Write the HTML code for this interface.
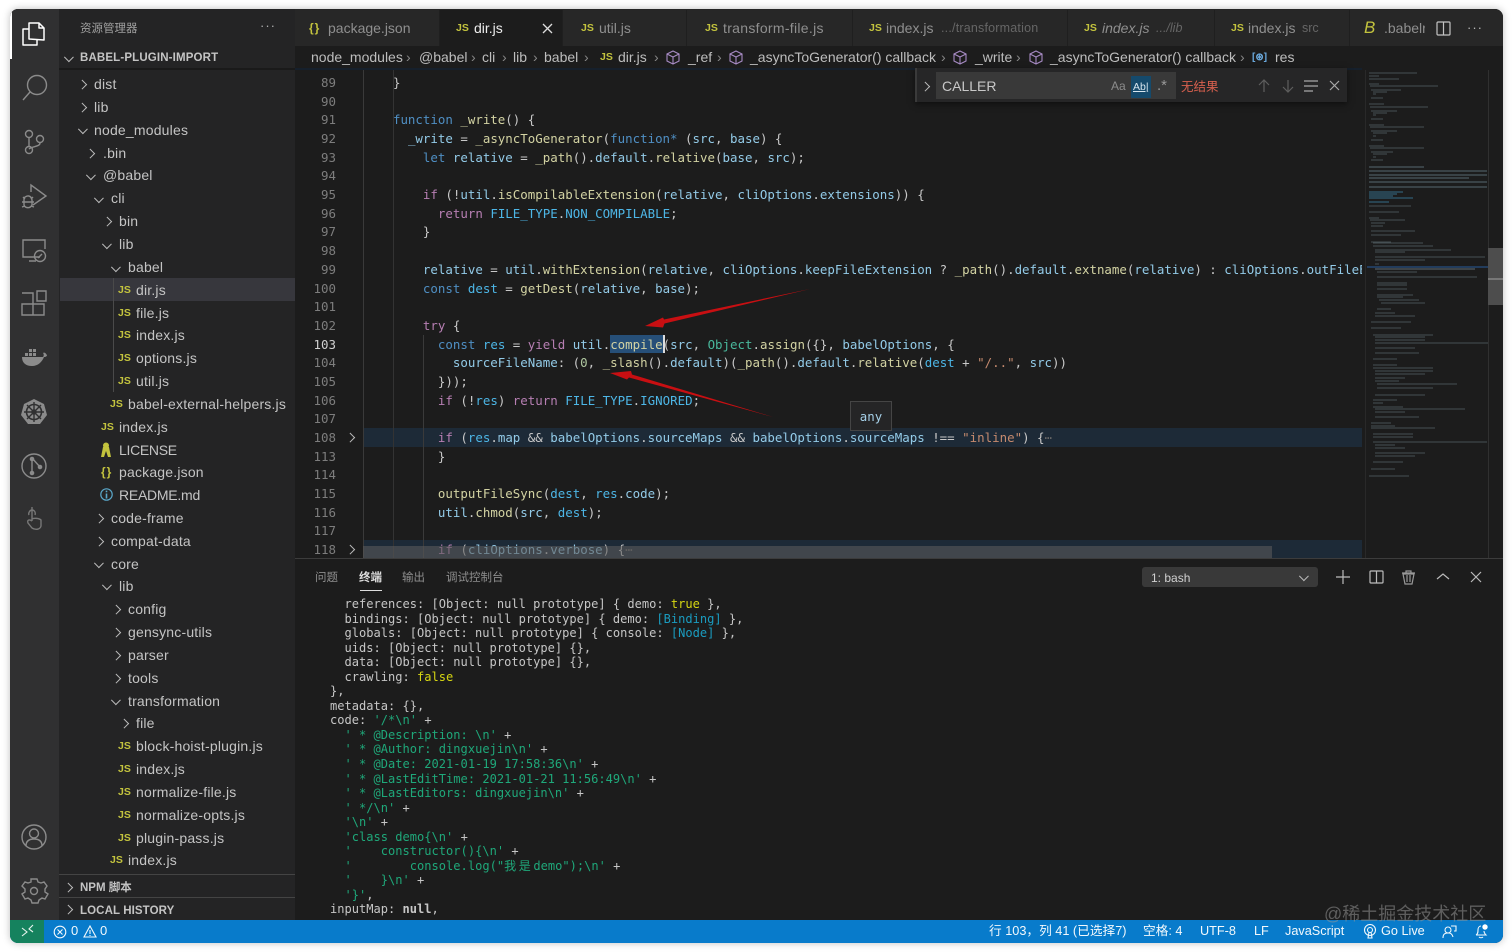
<!DOCTYPE html>
<html><head><meta charset="utf-8">
<style>
html,body{margin:0;padding:0;background:#fff;width:1512px;height:952px;overflow:hidden}
#sh{position:absolute;left:10px;top:9px;width:1493px;height:934px;border-radius:8px;box-shadow:0 0 8px rgba(0,0,0,.25)}
#w{position:absolute;left:0;top:0;width:1512px;height:952px;clip-path:inset(9px 9px 9px 10px round 8px);background:#1c1c1c;font-family:"Liberation Sans","Noto Sans CJK SC",sans-serif;color:#ccc;overflow:hidden}
.b{position:absolute}
.t{position:absolute;height:24px;line-height:24px;white-space:nowrap;font-size:14px;color:#c4c4c4;letter-spacing:.19px}
.j{position:absolute;font:bold 10.5px/24px "Liberation Sans",sans-serif;color:#c3c33e;height:24px;white-space:nowrap}
.cr,.cd{position:absolute;width:6.5px;height:6.5px;border-top:1.1px solid #bbb;border-right:1.1px solid #bbb;box-sizing:border-box}
.cr{transform:rotate(45deg)}.cd{transform:rotate(135deg)}
.tb{position:absolute;top:10px;height:36px;background:#272727;border-right:1px solid #1f1f1f;box-sizing:border-box}
.tt{position:absolute;top:16px;line-height:24px;font-size:14px;color:#8f8f8f;white-space:nowrap}
.bc{position:absolute;top:46px;line-height:23px;font-size:14px;color:#bdbdbd;white-space:nowrap}
.ln{position:absolute;margin-top:1px;width:40px;left:296px;text-align:right;font:12.45px/18px "DejaVu Sans Mono",monospace;color:#7d7d7d;height:19px}
.cl{position:absolute;margin-top:1px;left:363px;width:999px;overflow:hidden;font:12.45px/18px "DejaVu Sans Mono",monospace;color:#c8c8c8;white-space:pre;height:18px}
.k{color:#4f8fc4}.p{color:#b77fb3}.v{color:#93cbe8}.f{color:#d3d3a3}.s{color:#c58a6e}.c{color:#4db6e6}.n{color:#49b89c}.m{color:#b0c8a0}
#term{position:absolute;left:330px;top:597px;font:12.05px/14.55px "DejaVu Sans Mono","Noto Sans CJK SC",monospace;color:#c6c6c6;white-space:pre}
#term .g{color:#1fa87a}#term .y{color:#d6d612}#term .u{color:#1a9cc0}
.st{position:absolute;top:920px;line-height:22px;font-size:12.7px;color:#f2f8fc;white-space:nowrap}
.pt{position:absolute;top:566px;line-height:24px;font-size:11.5px;color:#8e8e8e;white-space:nowrap}
</style></head><body>
<div id="sh"></div>
<div id="w">
<!-- activity bar -->
<div class="b" style="left:10px;top:9px;width:49px;height:911px;background:#303031"></div>
<div class="b" style="left:10px;top:9px;width:2px;height:50px;background:#fff"></div>
<svg class="b" style="left:0;top:0" width="60" height="560" fill="none" stroke="#8b8b8b" stroke-width="1.4">
<path stroke="#fff" stroke-width="1.5" stroke-linejoin="round" d="M29 39V23h10l5 5v12zM39 23v5h5M29 29h-6v16h14v-5"/>
<circle cx="37" cy="85" r="9.5"/><path d="M30 92l-7 8"/>
<circle cx="29" cy="134" r="3.5"/><circle cx="40" cy="139" r="3.5"/><circle cx="29" cy="150" r="3.5"/><path d="M29 138v8M40 143c0 4-8 3-11 6"/>
<path d="M31 192v-7l15 11-13 9M24 198c3-3 7-3 8 2v5c-2 4-7 3-8 0zM22 202h12M22 207l3-1M34 207l-3-1M23 197l2 2M33 197l-2 2"/>
<path d="M40 257H23v-17h22v9M29 261h7"/><circle cx="40" cy="256" r="5.5"/><path d="M38 258l4-4"/>
<path d="M22 304h11v11H22zM33 304h11v11H33zM22 293h11v11M37 291h9v10h-9z"/>
<path fill="#8b8b8b" stroke="none" d="M22 357h21c1-1 1-3 0-4 1-1 3 0 3 1l1 1c0 1-1 2-3 2-2 5-6 9-12 9-6 0-10-3-10-9zM25 353h3v3h-3zM29 353h3v3h-3zM33 353h3v3h-3zM33 349h3v3h-3zM29 349h3v3h-3z"/>
<path fill="#8b8b8b" stroke="none" d="M34 399l10 5 3 11-7 9H28l-7-9 3-11z"/>
<circle cx="34" cy="412" r="7.5" stroke="#303031" stroke-width="1.6"/><circle cx="34" cy="412" r="2" stroke="#303031" /><path stroke="#303031" d="M34 402v20M24 412h20M27 405l14 14M41 405l-14 14"/>
<circle cx="34" cy="466" r="12"/><path d="M32 458v16M32 458l8 9"/><circle cx="32" cy="459" r="1.6" fill="#8b8b8b"/><circle cx="32" cy="473" r="1.6" fill="#8b8b8b"/><circle cx="40" cy="467" r="1.6" fill="#8b8b8b"/>
<path stroke="#777" d="M32 507v14M32 521c-3-2-5-1-4 2l4 5c3 2 8 2 9-2v-6c-2-2-7-2-9-1M35 515c1-3-1-5-3-5s-4 3-3 5"/>
</svg>
<svg class="b" style="left:0;top:820px" width="60" height="100" fill="none" stroke="#8b8b8b" stroke-width="1.4">
<circle cx="34" cy="17" r="12"/><circle cx="34" cy="13.5" r="4.5"/><path d="M26 26c0-5 3-7 8-7s8 2 8 7"/>
<circle cx="34" cy="71" r="3.5"/>
<path d="M31 59h6l1 3 3 1 3-1 3 4-2 3v3l3 2-3 5-3-1-3 2-1 3h-6l-1-3-3-2-3 1-3-5 3-2v-3l-3-3 3-4 3 1 3-1z"/>
</svg>

<!-- sidebar -->
<div class="b" style="left:59px;top:9px;width:236px;height:911px;background:#242425"></div>
<div class="b" style="left:80px;top:18px;font-size:11.5px;line-height:22px;color:#a0a0a0">资源管理器</div>
<div class="b" style="left:260px;top:15px;font-size:13px;line-height:22px;color:#b0b0b0;letter-spacing:1px">···</div>
<div class="cd" style="left:66px;top:54px"></div>
<div class="b" style="left:80px;top:47px;font-size:11.5px;font-weight:bold;line-height:22px;color:#c4c4c4;letter-spacing:.15px">BABEL-PLUGIN-IMPORT</div>
<div class="b" style="left:59px;top:68px;width:236px;height:2px;background:#1a1a1a"></div>
<div class="b" style="left:60px;top:278px;width:235px;height:23px;background:#37373d"></div>
<div class="b" style="left:113px;top:278px;width:1px;height:114px;background:#4a4a4a"></div>

<div class="cr" style="left:79px;top:81px"></div><div class="t" style="left:94px;top:72px">dist</div>
<div class="cr" style="left:79px;top:104px"></div><div class="t" style="left:94px;top:95px">lib</div>
<div class="cd" style="left:80px;top:126px"></div><div class="t" style="left:94px;top:118px">node_modules</div>
<div class="cr" style="left:87px;top:150px"></div><div class="t" style="left:103px;top:141px">.bin</div>
<div class="cd" style="left:88px;top:172px"></div><div class="t" style="left:103px;top:163px">@babel</div>
<div class="cd" style="left:96px;top:195px"></div><div class="t" style="left:111px;top:186px">cli</div>
<div class="cr" style="left:104px;top:218px"></div><div class="t" style="left:119px;top:209px">bin</div>
<div class="cd" style="left:104px;top:241px"></div><div class="t" style="left:119px;top:232px">lib</div>
<div class="cd" style="left:113px;top:264px"></div><div class="t" style="left:128px;top:255px">babel</div>
<div class="j" style="left:118px;top:278px">JS</div><div class="t" style="left:136px;top:278px">dir.js</div>
<div class="j" style="left:118px;top:301px">JS</div><div class="t" style="left:136px;top:301px">file.js</div>
<div class="j" style="left:118px;top:323px">JS</div><div class="t" style="left:136px;top:323px">index.js</div>
<div class="j" style="left:118px;top:346px">JS</div><div class="t" style="left:136px;top:346px">options.js</div>
<div class="j" style="left:118px;top:369px">JS</div><div class="t" style="left:136px;top:369px">util.js</div>
<div class="j" style="left:110px;top:392px">JS</div><div class="t" style="left:128px;top:392px">babel-external-helpers.js</div>
<div class="j" style="left:101px;top:415px">JS</div><div class="t" style="left:119px;top:415px">index.js</div>
<svg class="b" style="left:101px;top:442px" width="12" height="16" fill="#c3c33e"><circle cx="5" cy="3.5" r="3"/><path d="M2 5h6l2 10H7L5 9l-2 6H0z"/></svg><div class="t" style="left:119px;top:438px;letter-spacing:-.3px">LICENSE</div>
<div class="j" style="left:101px;top:460px;font-size:12px;letter-spacing:1px">{}</div><div class="t" style="left:119px;top:460px">package.json</div>
<svg class="b" style="left:100px;top:488px" width="13" height="13" fill="none" stroke="#5aa7c9" stroke-width="1.2"><circle cx="6.5" cy="6.5" r="5.7"/><path stroke-width="1.6" d="M6.5 5.5v5M6.5 2.6v1.6"/></svg><div class="t" style="left:119px;top:483px;letter-spacing:-.25px">README.md</div>
<div class="cr" style="left:96px;top:515px"></div><div class="t" style="left:111px;top:506px">code-frame</div>
<div class="cr" style="left:96px;top:538px"></div><div class="t" style="left:111px;top:529px">compat-data</div>
<div class="cd" style="left:96px;top:560px"></div><div class="t" style="left:111px;top:552px">core</div>
<div class="cd" style="left:104px;top:582px"></div><div class="t" style="left:119px;top:574px">lib</div>
<div class="cr" style="left:113px;top:606px"></div><div class="t" style="left:128px;top:597px">config</div>
<div class="cr" style="left:113px;top:629px"></div><div class="t" style="left:128px;top:620px">gensync-utils</div>
<div class="cr" style="left:113px;top:652px"></div><div class="t" style="left:128px;top:643px">parser</div>
<div class="cr" style="left:113px;top:675px"></div><div class="t" style="left:128px;top:666px">tools</div>
<div class="cd" style="left:113px;top:697px"></div><div class="t" style="left:128px;top:689px">transformation</div>
<div class="cr" style="left:121px;top:720px"></div><div class="t" style="left:136px;top:711px">file</div>
<div class="j" style="left:118px;top:734px">JS</div><div class="t" style="left:136px;top:734px">block-hoist-plugin.js</div>
<div class="j" style="left:118px;top:757px">JS</div><div class="t" style="left:136px;top:757px">index.js</div>
<div class="j" style="left:118px;top:780px">JS</div><div class="t" style="left:136px;top:780px">normalize-file.js</div>
<div class="j" style="left:118px;top:803px">JS</div><div class="t" style="left:136px;top:803px">normalize-opts.js</div>
<div class="j" style="left:118px;top:826px">JS</div><div class="t" style="left:136px;top:826px">plugin-pass.js</div>
<div class="j" style="left:110px;top:848px">JS</div><div class="t" style="left:128px;top:848px">index.js</div>

<div class="b" style="left:59px;top:874px;width:236px;height:1px;background:#444"></div>
<div class="b" style="left:59px;top:897px;width:236px;height:1px;background:#444"></div>
<div class="cr" style="left:65px;top:884px"></div><div class="b" style="left:80px;top:877px;font-size:11.5px;font-weight:bold;line-height:22px;color:#c4c4c4">NPM 脚本</div>
<div class="cr" style="left:65px;top:906px"></div><div class="b" style="left:80px;top:900px;font-size:11.5px;font-weight:bold;line-height:22px;color:#c4c4c4;letter-spacing:.1px">LOCAL HISTORY</div>

<!-- tab bar -->
<div class="b" style="left:295px;top:9px;width:1208px;height:37px;background:#272727"></div>
<div class="tb" style="left:295px;width:145px"></div>
<div class="tb" style="left:440px;width:123px;background:#1c1c1c"></div>
<div class="tb" style="left:563px;width:124px"></div>
<div class="tb" style="left:687px;width:166px"></div>
<div class="tb" style="left:853px;width:215px"></div>
<div class="tb" style="left:1068px;width:147px"></div>
<div class="tb" style="left:1215px;width:135px"></div>
<div class="j" style="left:309px;top:16px;font-size:12px;letter-spacing:1px">{}</div><div class="tt" style="left:328px">package.json</div>
<div class="j" style="left:456px;top:16px">JS</div><div class="tt" style="left:474px;color:#ececec">dir.js</div>
<svg class="b" style="left:542px;top:23px" width="11" height="11" stroke="#ddd" stroke-width="1.3"><path d="M1 1l9 9M10 1l-9 9"/></svg>
<div class="j" style="left:581px;top:16px">JS</div><div class="tt" style="left:599px">util.js</div>
<div class="j" style="left:705px;top:16px">JS</div><div class="tt" style="left:723px;letter-spacing:.3px">transform-file.js</div>
<div class="j" style="left:869px;top:16px">JS</div><div class="tt" style="left:886px">index.js</div><div class="tt" style="left:941px;font-size:12.5px;color:#666;letter-spacing:.2px">.../transformation</div>
<div class="j" style="left:1084px;top:16px">JS</div><div class="tt" style="left:1102px;font-style:italic">index.js</div><div class="tt" style="left:1156px;font-size:12.5px;color:#666;font-style:italic">.../lib</div>
<div class="j" style="left:1231px;top:16px">JS</div><div class="tt" style="left:1248px">index.js</div><div class="tt" style="left:1302px;font-size:12.5px;color:#666">src</div>
<div class="b" style="left:1350px;top:10px;width:75px;height:36px;overflow:hidden">
<div class="tt" style="left:14px;top:6px;color:#c3c33e;font:italic 17px/24px 'Liberation Sans',sans-serif">B</div><div class="tt" style="left:34px;top:6px">.babelrc</div></div>
<svg class="b" style="left:1436px;top:21px" width="15" height="15" fill="none" stroke="#c4c4c4" stroke-width="1.2"><rect x="1" y="1" width="13" height="13" rx="1"/><path d="M7.5 1v13"/></svg>
<div class="b" style="left:1467px;top:17px;font-size:13px;line-height:22px;color:#b8b8b8;letter-spacing:1px">···</div>

<!-- breadcrumbs -->
<div class="b" style="left:295px;top:46px;width:1208px;height:22px;background:#1c1c1c"></div>
<div class="bc" style="left:311px">node_modules</div>
<div class="bc" style="left:406px;color:#888">›</div>
<div class="bc" style="left:419px">@babel</div>
<div class="bc" style="left:471px;color:#888">›</div>
<div class="bc" style="left:482px">cli</div>
<div class="bc" style="left:502px;color:#888">›</div>
<div class="bc" style="left:513px">lib</div>
<div class="bc" style="left:533px;color:#888">›</div>
<div class="bc" style="left:544px">babel</div>
<div class="bc" style="left:584px;color:#888">›</div>
<div class="j" style="left:600px;top:45px">JS</div>
<div class="bc" style="left:618px">dir.js</div>
<div class="bc" style="left:654px;color:#888">›</div>
<svg class="b" style="left:666px;top:50px;" width="14" height="15" fill="none" stroke="#a78bc4" stroke-width="1.1"><path d="M7 1l6 3v7l-6 3-6-3V4zM1 4l6 3 6-3M7 7v7"/></svg>
<div class="bc" style="left:688px">_ref</div>
<div class="bc" style="left:717px;color:#888">›</div>
<svg class="b" style="left:729px;top:50px" width="14" height="15" fill="none" stroke="#a78bc4" stroke-width="1.1"><path d="M7 1l6 3v7l-6 3-6-3V4zM1 4l6 3 6-3M7 7v7"/></svg>
<div class="bc" style="left:750px">_asyncToGenerator() callback</div>
<div class="bc" style="left:941px;color:#888">›</div>
<svg class="b" style="left:953px;top:50px" width="14" height="15" fill="none" stroke="#a78bc4" stroke-width="1.1"><path d="M7 1l6 3v7l-6 3-6-3V4zM1 4l6 3 6-3M7 7v7"/></svg>
<div class="bc" style="left:975px">_write</div>
<div class="bc" style="left:1016px;color:#888">›</div>
<svg class="b" style="left:1029px;top:50px" width="14" height="15" fill="none" stroke="#a78bc4" stroke-width="1.1"><path d="M7 1l6 3v7l-6 3-6-3V4zM1 4l6 3 6-3M7 7v7"/></svg>
<div class="bc" style="left:1050px">_asyncToGenerator() callback</div>
<div class="bc" style="left:1240px;color:#888">›</div>
<div class="bc" style="left:1252px;font-size:10px;color:#6aa9dd;font-weight:bold">[⊛]</div>
<div class="bc" style="left:1275px">res</div>
<div class="b" style="left:295px;top:68px;width:1070px;height:2px;background:#16202c"></div>

<!-- editor overlays -->
<div class="b" style="left:363px;top:428px;width:999px;height:19px;background:#1d2a37"></div>
<div class="b" style="left:363px;top:540px;width:999px;height:18px;background:#1d2a37"></div>
<div class="b" style="left:610px;top:335px;width:53px;height:18px;background:#264f78"></div>
<div class="b" style="left:663px;top:335px;width:1.5px;height:18px;background:#ddd"></div>
<div class="b" style="left:363px;top:70px;width:1px;height:488px;background:#3a3a3a"></div>
<div class="b" style="left:393px;top:70px;width:1px;height:488px;background:#333"></div>
<div class="b" style="left:423px;top:335px;width:1px;height:223px;background:#3a3a3a"></div>

<div class="ln" style="top:73px">89</div><div class="cl" style="top:73px">    }</div>
<div class="ln" style="top:92px">90</div>
<div class="ln" style="top:110px">91</div><div class="cl" style="top:110px">    <span class="k">function</span> <span class="f">_write</span>() {</div>
<div class="ln" style="top:129px">92</div><div class="cl" style="top:129px">      <span class="v">_write</span> = <span class="f">_asyncToGenerator</span>(<span class="k">function*</span> (<span class="v">src</span>, <span class="v">base</span>) {</div>
<div class="ln" style="top:148px">93</div><div class="cl" style="top:148px">        <span class="k">let</span> <span class="v">relative</span> = <span class="f">_path</span>().<span class="v">default</span>.<span class="f">relative</span>(<span class="v">base</span>, <span class="v">src</span>);</div>
<div class="ln" style="top:166px">94</div>
<div class="ln" style="top:185px">95</div><div class="cl" style="top:185px">        <span class="p">if</span> (!<span class="v">util</span>.<span class="f">isCompilableExtension</span>(<span class="v">relative</span>, <span class="v">cliOptions</span>.<span class="v">extensions</span>)) {</div>
<div class="ln" style="top:204px">96</div><div class="cl" style="top:204px">          <span class="p">return</span> <span class="c">FILE_TYPE</span>.<span class="c">NON_COMPILABLE</span>;</div>
<div class="ln" style="top:222px">97</div><div class="cl" style="top:222px">        }</div>
<div class="ln" style="top:241px">98</div>
<div class="ln" style="top:260px">99</div><div class="cl" style="top:260px">        <span class="v">relative</span> = <span class="v">util</span>.<span class="f">withExtension</span>(<span class="v">relative</span>, <span class="v">cliOptions</span>.<span class="v">keepFileExtension</span> ? <span class="f">_path</span>().<span class="v">default</span>.<span class="f">extname</span>(<span class="v">relative</span>) : <span class="v">cliOptions</span>.<span class="v">outFileExtension</span></div>
<div class="ln" style="top:279px">100</div><div class="cl" style="top:279px">        <span class="k">const</span> <span class="c">dest</span> = <span class="f">getDest</span>(<span class="v">relative</span>, <span class="v">base</span>);</div>
<div class="ln" style="top:297px">101</div>
<div class="ln" style="top:316px">102</div><div class="cl" style="top:316px">        <span class="p">try</span> {</div>
<div class="ln" style="top:335px;color:#d0d0d0">103</div><div class="cl" style="top:335px">          <span class="k">const</span> <span class="c">res</span> = <span class="p">yield</span> <span class="v">util</span>.<span class="f">compile</span>(<span class="v">src</span>, <span class="n">Object</span>.<span class="f">assign</span>({}, <span class="v">babelOptions</span>, {</div>
<div class="ln" style="top:353px">104</div><div class="cl" style="top:353px">            <span class="v">sourceFileName</span>: (<span class="m">0</span>, <span class="f">_slash</span>().<span class="v">default</span>)(<span class="f">_path</span>().<span class="v">default</span>.<span class="f">relative</span>(<span class="c">dest</span> + <span class="s">"/.."</span>, <span class="v">src</span>))</div>
<div class="ln" style="top:372px">105</div><div class="cl" style="top:372px">          }));</div>
<div class="ln" style="top:391px">106</div><div class="cl" style="top:391px">          <span class="p">if</span> (!<span class="c">res</span>) <span class="p">return</span> <span class="c">FILE_TYPE</span>.<span class="c">IGNORED</span>;</div>
<div class="ln" style="top:409px">107</div>
<div class="ln" style="top:428px">108</div><div class="cl" style="top:428px">          <span class="p">if</span> (<span class="c">res</span>.<span class="v">map</span> &amp;&amp; <span class="v">babelOptions</span>.<span class="v">sourceMaps</span> &amp;&amp; <span class="v">babelOptions</span>.<span class="v">sourceMaps</span> !== <span class="s">"inline"</span>) {<span style="color:#666">⋯</span></div>
<div class="ln" style="top:447px">113</div><div class="cl" style="top:447px">          }</div>
<div class="ln" style="top:465px">114</div>
<div class="ln" style="top:484px">115</div><div class="cl" style="top:484px">          <span class="f">outputFileSync</span>(<span class="c">dest</span>, <span class="c">res</span>.<span class="v">code</span>);</div>
<div class="ln" style="top:503px">116</div><div class="cl" style="top:503px">          <span class="v">util</span>.<span class="f">chmod</span>(<span class="v">src</span>, <span class="c">dest</span>);</div>
<div class="ln" style="top:521px">117</div>
<div class="ln" style="top:540px">118</div><div class="cl" style="top:540px">          <span class="p">if</span> (<span class="v">cliOptions</span>.<span class="v">verbose</span>) {<span style="color:#666">⋯</span></div>
<div class="cr" style="left:347px;top:434px"></div>
<div class="cr" style="left:347px;top:546px"></div>
<div class="b" style="left:363px;top:546px;width:909px;height:12px;background:rgba(90,90,90,.6)"></div>

<!-- red arrows -->
<svg class="b" style="left:600px;top:280px" width="220" height="145" fill="#c80f12">
<path d="M210 9L64 39.500 63 37.500 45 46 63 47.500 64.500 43.500z"/>
<path d="M173 137L32 94.500 31 91 10 93 27 99.500 29 97.500z"/>
</svg>

<!-- tooltip -->
<div class="b" style="left:850px;top:401px;width:40px;height:28px;background:#252526;border:1px solid #454545;font:12.4px/29px 'DejaVu Sans Mono',monospace;color:#a6d0e8;text-align:center">any</div>

<!-- minimap -->
<div class="b" style="left:1362px;top:68px;width:141px;height:490px;background:#1c1c1c"></div>
<div class="b" style="left:1365px;top:70px;width:1px;height:488px;background:#292929"></div>
<div class="b" style="left:1367px;top:266px;width:121px;height:2px;background:#223c5c"></div>
<svg class="b" style="left:1367px;top:68px" width="122" height="420" fill="none" stroke-width=".9" stroke="#59666c" stroke-opacity=".7">
<path d="M2 5h48M2 8h10M2 11h30M2 16h10M3 18h68M4 22h30M6 24h14M6 26h3M4 30h12M2 36h15M3 39h58M4 43h26M6 45h14M6 47h3M4 51h12M2 57h15M3 59h54M4 63h26M6 65h14M6 68h3M4 72h12M2 78h15M3 80h54M4 84h22M6 86h14M6 89h3M4 92h12"/>
<path stroke="#6f8a96" d="M2 99h55M2 103h118M2 107h118M2 110h100M2 114h118M2 119h118"/>
<path stroke="#3f8fb5" d="M2 124h34M2 126h28M2 128h24M2 130h44M2 134h20"/>
<path d="M2 138h42M2 144h30M2 150h10M3 152h35M4 155h14M4 158h12M4 163h44M4 167h30M4 174h20M6 175h50M6 178h60M8 182h76M8 184h30M8 189h110M8 192h50M8 196h4M10 204h40M10 209h100M10 215h30M10 217h30M10 221h30M10 227h36M10 229h26M12 232h40M14 235h44M10 241h14M8 245h20M8 248h40M4 254h40M4 260h30M6 267h60M8 269h50M8 272h50M8 275h114M8 280h40M8 285h44M6 291h24M6 297h24M6 300h60M8 303h58M8 306h50M8 310h30M8 313h24M10 316h80M10 320h56M8 327h50M6 332h24M6 335h10M6 339h30M8 341h90M8 344h30M8 349h44M4 355h20M4 358h24M4 360h64M6 366h40M6 369h40M6 374h114M8 377h20M8 380h30M8 385h50M8 388h40M6 394h30M4 401h24M2 408h40"/>
<path stroke="#7c8f99" d="M8 201h100"/>
</svg>
<div class="b" style="left:1488px;top:70px;width:1px;height:488px;background:#303030"></div>
<div class="b" style="left:1488px;top:248px;width:15px;height:57px;background:#4d4d4d"></div>
<div class="b" style="left:1488px;top:278px;width:15px;height:2px;background:#777"></div>

<!-- find widget -->
<div class="b" style="left:915px;top:68px;width:432px;height:34px;background:#262627;box-shadow:0 2px 6px rgba(0,0,0,.5)"></div>
<div class="b" style="left:915px;top:68px;width:2px;height:34px;background:#3a3a3a"></div>
<div class="cr" style="left:922px;top:83px"></div>
<div class="b" style="left:936px;top:72px;width:240px;height:27px;background:#393939"></div>
<div class="b" style="left:942px;top:72px;line-height:28px;font-size:14px;color:#c8c8c8">CALLER</div>
<div class="b" style="left:1111px;top:72px;line-height:28px;font-size:12px;color:#8c8c8c">Aa</div>
<div class="b" style="left:1131px;top:76px;width:20px;height:22px;background:#154a6c"></div>
<div class="b" style="left:1133px;top:76px;line-height:22px;font-size:10.5px;color:#d8e6ef;text-decoration:underline">Ab|</div>
<div class="b" style="left:1157px;top:72px;line-height:28px;font-size:15px;color:#999">.*</div>
<div class="b" style="left:1181px;top:74px;line-height:26px;font-size:12.5px;color:#d8604e">无结果</div>
<svg class="b" style="left:1256px;top:77px" width="90" height="18" fill="none" stroke="#5e5e5e" stroke-width="1.2">
<path d="M8 15V3M3 8l5-5 5 5M32 3v12M27 10l5 5 5-5"/>
<path stroke="#a8a8a8" d="M48 4h14M48 9h14M48 14h9M74 4l9 9M83 4l-9 9"/>
</svg>

<!-- panel -->
<div class="b" style="left:295px;top:558px;width:1208px;height:362px;background:#1c1c1c;border-top:1px solid #3c3c3c;box-sizing:border-box"></div>
<div class="pt" style="left:315px">问题</div>
<div class="pt" style="left:359px;color:#dcdcdc;font-weight:bold">终端</div>
<div class="b" style="left:360px;top:590px;width:22px;height:1px;background:#ddd"></div>
<div class="pt" style="left:402px">输出</div>
<div class="pt" style="left:446px">调试控制台</div>
<div class="b" style="left:1142px;top:567px;width:176px;height:20px;border-radius:3px;background:#393939;font-size:12px;line-height:22px;color:#d0d0d0;text-indent:9px">1: bash</div>
<div class="cd" style="left:1301px;top:573px"></div>
<svg class="b" style="left:1330px;top:566px" width="160" height="22" fill="none" stroke="#bbb" stroke-width="1.2">
<path d="M13 4v14M6 11h14"/>
<rect x="40" y="5" width="13" height="12" rx="1"/><path d="M46.500 5v12"/>
<path stroke="#999" d="M73 8l2 10h7l2-10zM72 7h13M76 7V5h5v2M77 9v7M80 9v7"/>
<path d="M107 13l6-5 6 5M141 6l10 10M151 6l-10 10"/>
</svg>

<div id="term">  references: [Object: null prototype] { demo: <span class="y">true</span> },
  bindings: [Object: null prototype] { demo: <span class="u">[Binding]</span> },
  globals: [Object: null prototype] { console: <span class="u">[Node]</span> },
  uids: [Object: null prototype] {},
  data: [Object: null prototype] {},
  crawling: <span class="y">false</span>
},
metadata: {},
code: <span class="g">'/*\n'</span> +
  <span class="g">' * @Description: \n'</span> +
  <span class="g">' * @Author: dingxuejin\n'</span> +
  <span class="g">' * @Date: 2021-01-19 17:58:36\n'</span> +
  <span class="g">' * @LastEditTime: 2021-01-21 11:56:49\n'</span> +
  <span class="g">' * @LastEditors: dingxuejin\n'</span> +
  <span class="g">' */\n'</span> +
  <span class="g">'\n'</span> +
  <span class="g">'class demo{\n'</span> +
  <span class="g">'    constructor(){\n'</span> +
  <span class="g">'        console.log("<span style="letter-spacing:2.6px">我是</span>demo");\n'</span> +
  <span class="g">'    }\n'</span> +
  <span class="g">'}'</span>,
inputMap: <b>null</b>,</div>

<!-- status bar -->
<div class="b" style="left:10px;top:920px;width:1493px;height:23px;background:#087bcb"></div>
<div class="b" style="left:10px;top:920px;width:34px;height:23px;background:#15825e"></div>
<svg class="b" style="left:20px;top:924px" width="16" height="15" fill="none" stroke="#e8f4ee" stroke-width="1.1"><path d="M2 4l5 4-5 4M13 1L9 5l4 3"/></svg>
<svg class="b" style="left:53px;top:925px" width="14" height="14" fill="none" stroke="#f2f8fc" stroke-width="1.1"><circle cx="7" cy="7" r="5.800"/><path d="M4.500 4.500l5 5M9.500 4.500l-5 5"/></svg>
<div class="st" style="left:71px;font-size:13px">0</div>
<svg class="b" style="left:83px;top:925px" width="14" height="13" fill="none" stroke="#f2f8fc" stroke-width="1.1"><path d="M7 1l6 11H1zM7 5v4M7 10v1"/></svg>
<div class="st" style="left:100px;font-size:13px">0</div>
<div class="st" style="left:989px">行 103，列 41 (已选择7)</div>
<div class="st" style="left:1143px">空格: 4</div>
<div class="st" style="left:1200px">UTF-8</div>
<div class="st" style="left:1254px">LF</div>
<div class="st" style="left:1285px">JavaScript</div>
<svg class="b" style="left:1363px;top:924px" width="14" height="15" fill="none" stroke="#f2f8fc" stroke-width="1.1"><circle cx="7" cy="6" r="5.500"/><circle cx="7" cy="6" r="2.500"/><path d="M6 8l-1 6h4l-1-6"/></svg>
<div class="st" style="left:1381px">Go Live</div>
<svg class="b" style="left:1442px;top:924px" width="15" height="15" fill="none" stroke="#f2f8fc" stroke-width="1.1"><circle cx="6" cy="6" r="3"/><path d="M1 14c0-4 2-5 5-5s4 1 5 4M9 2h5v5h-2"/></svg>
<svg class="b" style="left:1474px;top:923px" width="15" height="16" fill="none" stroke="#f2f8fc" stroke-width="1.1"><path d="M2 12c2-1 2-3 2-5s1-4 3-4M2 12h10c-1-1-2-2-2-4M5 14c1 1 3 1 4 0"/><circle cx="11" cy="4" r="2.700" fill="#fff" stroke="none"/></svg>
<div class="b" style="left:1324px;top:901px;font-size:18px;line-height:26px;color:rgba(150,150,150,.55);white-space:nowrap">@稀土掘金技术社区</div>
</div>
</body></html>
